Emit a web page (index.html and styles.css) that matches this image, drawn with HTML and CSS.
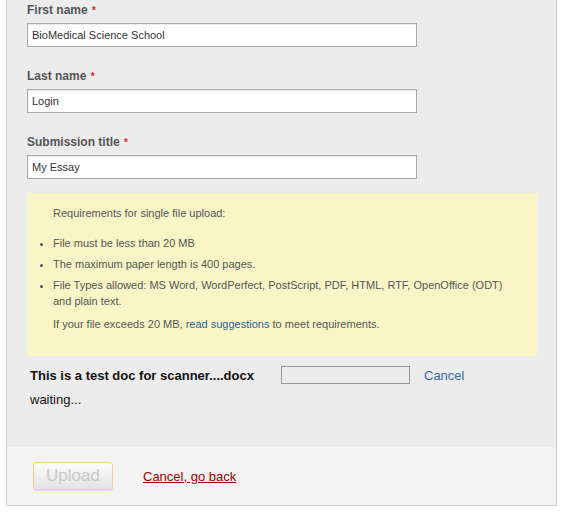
FILE: index.html
```html
<!DOCTYPE html>
<html>
<head>
<meta charset="utf-8">
<link rel="stylesheet" href="styles.css">
</head>
<body>
<div class="panel">
  <div class="body">
    <div class="field">
      <div class="label">First name <span class="req">*</span></div>
      <div class="input">BioMedical Science School</div>
    </div>
    <div class="field">
      <div class="label">Last name <span class="req">*</span></div>
      <div class="input">Login</div>
    </div>
    <div class="field">
      <div class="label">Submission title <span class="req">*</span></div>
      <div class="input">My Essay</div>
    </div>
    <div class="notice">
      <p class="intro">Requirements for single file upload:</p>
      <ul class="reqs">
        <li>File must be less than 20 MB</li>
        <li>The maximum paper length is 400 pages.</li>
        <li>File Types allowed: MS Word, WordPerfect, PostScript, PDF, HTML, RTF, OpenOffice (ODT) and plain text.</li>
      </ul>
      <p class="outro">If your file exceeds 20 MB, <a class="blue" href="#">read suggestions</a> to meet requirements.</p>
    </div>
    <div class="filerow">
      <span class="fname">This is a test doc for scanner....docx</span>
      <span class="progress"></span>
      <a class="blue cancel" href="#">Cancel</a>
    </div>
    <div class="waiting">waiting...</div>
  </div>
  <div class="footer">
    <button class="upload" disabled>Upload</button>
    <a class="back" href="#">Cancel, go back</a>
  </div>
</div>
</body>
</html>
```
FILE: styles.css
```css
html, body {
  margin: 0;
  padding: 0;
  background: #ffffff;
  font-family: "Liberation Sans", Arial, sans-serif;
}
.panel {
  margin-left: 6px;
  width: 549px;
  border: 1px solid #cfcfcf;
  border-top: none;
  background: #ececec;
}
.body {
  padding: 1px 19px 38px 20px;
}
.field {
  margin-bottom: 20px;
}
.field:nth-child(3) {
  margin-bottom: 14px;
}
.label {
  font-size: 12px;
  font-weight: bold;
  color: #555;
  line-height: 18px;
  height: 18px;
  margin-bottom: 4px;
}
.req {
  color: #ec1c24;
  font-size: 10px;
  line-height: 0;
  margin-left: 1px;
}
.input {
  width: 380px;
  height: 22px;
  border: 1px solid #a9a9a9;
  background: #fff;
  font-size: 11px;
  color: #333;
  line-height: 22px;
  padding: 0 4px;
  box-shadow: inset 0 1px 1px rgba(0,0,0,0.08);
}
.notice {
  background: #f9f5c6;
  padding: 12px 20px 24px 0;
  font-size: 11px;
  color: #555;
  line-height: 16px;
}
.notice p {
  margin: 0;
  padding-left: 26px;
}
.reqs {
  margin: 14px 0 7px 0;
  padding-left: 26px;
}
.reqs li {
  margin-bottom: 5px;
}
.reqs li:last-child {
  margin-bottom: 0;
}
.blue {
  color: #2c5f9a;
  text-decoration: none;
}
.filerow {
  display: flex;
  align-items: center;
  margin-top: 10px;
  height: 18px;
  padding-left: 3px;
}
.fname {
  font-size: 13px;
  font-weight: bold;
  color: #111;
  width: 251px;
}
.progress {
  width: 127px;
  height: 16px;
  border: 1px solid #999;
  background: #ececec;
}
.cancel {
  font-size: 13px;
  margin-left: 14px;
  color: #3a6aa3;
}
.waiting {
  font-size: 13px;
  color: #111;
  line-height: 18px;
  margin-top: 7px;
  padding-left: 3px;
}
.footer {
  background: #f3f3f3;
  padding: 15px 0 15px 26px;
  display: flex;
  align-items: center;
}
.upload {
  width: 80px;
  height: 28px;
  border: 1px solid #ecd28c;
  border-radius: 3px;
  background: linear-gradient(#fbfbfb, #e3e3e3);
  color: #c8c8c8;
  font-family: "Liberation Sans", Arial, sans-serif;
  font-size: 17px;
  padding: 0;
  box-shadow: 0 1px 1px rgba(0,0,0,0.08);
}
.back {
  margin-left: 30px;
  font-size: 13px;
  color: #a00000;
  text-decoration: underline;
}
```
